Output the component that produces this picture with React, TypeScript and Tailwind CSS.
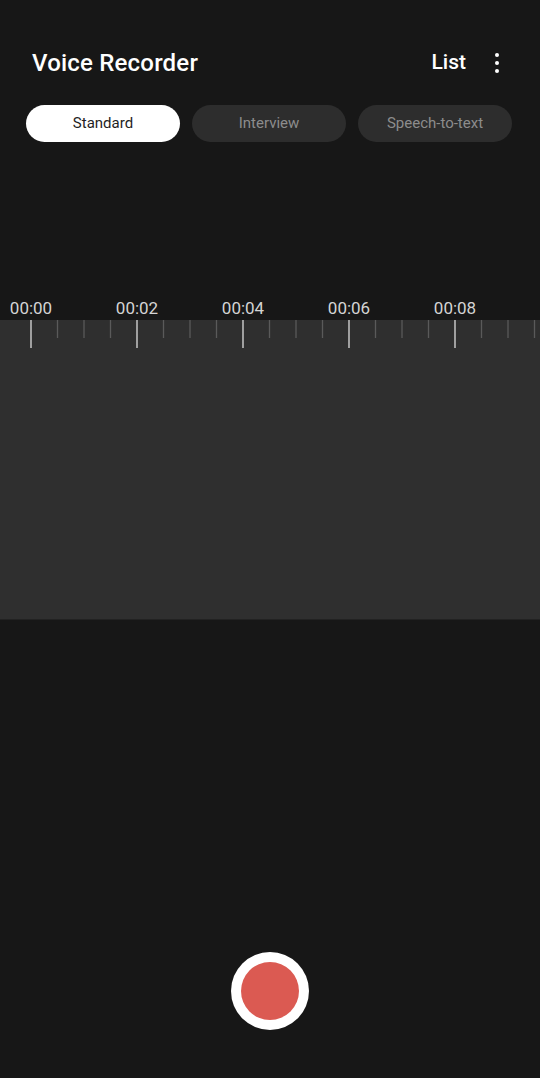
import React from 'react';

const tabs = ['Standard', 'Interview', 'Speech-to-text'];
const labels = ['00:00', '00:02', '00:04', '00:06', '00:08'];

const Ruler: React.FC = () => {
  const ticks: React.ReactNode[] = [];
  for (let i = 0; i < 20; i++) {
    const x = 31 + i * 26.5;
    if (x > 540) break;
    const major = i % 4 === 0;
    ticks.push(
      <line
        key={i}
        x1={x}
        x2={x}
        y1={0}
        y2={major ? 28 : 18}
        stroke={major ? '#bdbdbd' : '#5a5a5a'}
        strokeWidth={major ? 1.6 : 1.3}
      />
    );
  }
  return (
    <svg width="540" height="30" viewBox="0 0 540 30" className="block">
      {ticks}
    </svg>
  );
};

export default function App() {
  return (
    <div className="w-[540px] h-[1078px] bg-[#171717] flex flex-col overflow-hidden" style={{ fontFamily: 'Roboto, "Noto Sans", sans-serif' }}>
      {/* Header */}
      <div className="mt-[43px] h-[40px] flex items-center justify-between pl-8 pr-[41px]">
        <h1 className="text-[24px] font-medium text-white tracking-[0.2px]">Voice Recorder</h1>
        <div className="flex items-center gap-[29px]">
          <span className="text-[21px] font-medium text-white">List</span>
          <div className="flex flex-col gap-[4px] items-center">
            <span className="w-[4px] h-[4px] rounded-full bg-white" />
            <span className="w-[4px] h-[4px] rounded-full bg-white" />
            <span className="w-[4px] h-[4px] rounded-full bg-white" />
          </div>
        </div>
      </div>

      {/* Mode tabs */}
      <div className="mt-[22px] pl-[26px] flex gap-[12px]">
        {tabs.map((t, i) => (
          <button
            key={t}
            className={
              i === 0
                ? 'w-[154px] h-[37px] rounded-full bg-white text-[#1f1f1f] text-[15px]'
                : 'w-[154px] h-[37px] rounded-full bg-[#2d2d2d] text-[#8c8c8c] text-[15px]'
            }
          >
            {t}
          </button>
        ))}
      </div>

      {/* Timeline labels */}
      <div className="mt-[154px] h-[24px] flex ml-[-22px]">
        {labels.map((l) => (
          <span key={l} className="w-[106px] shrink-0 text-center text-[17px] leading-[24px] text-[#d4d4d4]">
            {l}
          </span>
        ))}
      </div>

      {/* Waveform area */}
      <div className="h-[300px] bg-[#2f2f2f] border-b border-[#222]">
        <Ruler />
      </div>

      {/* Record button */}
      <div className="flex-1 flex items-end justify-center pb-[48px]">
        <button className="w-[78px] h-[78px] rounded-full bg-white flex items-center justify-center">
          <span className="w-[58px] h-[58px] rounded-full bg-[#db5a52]" />
        </button>
      </div>
    </div>
  );
}
